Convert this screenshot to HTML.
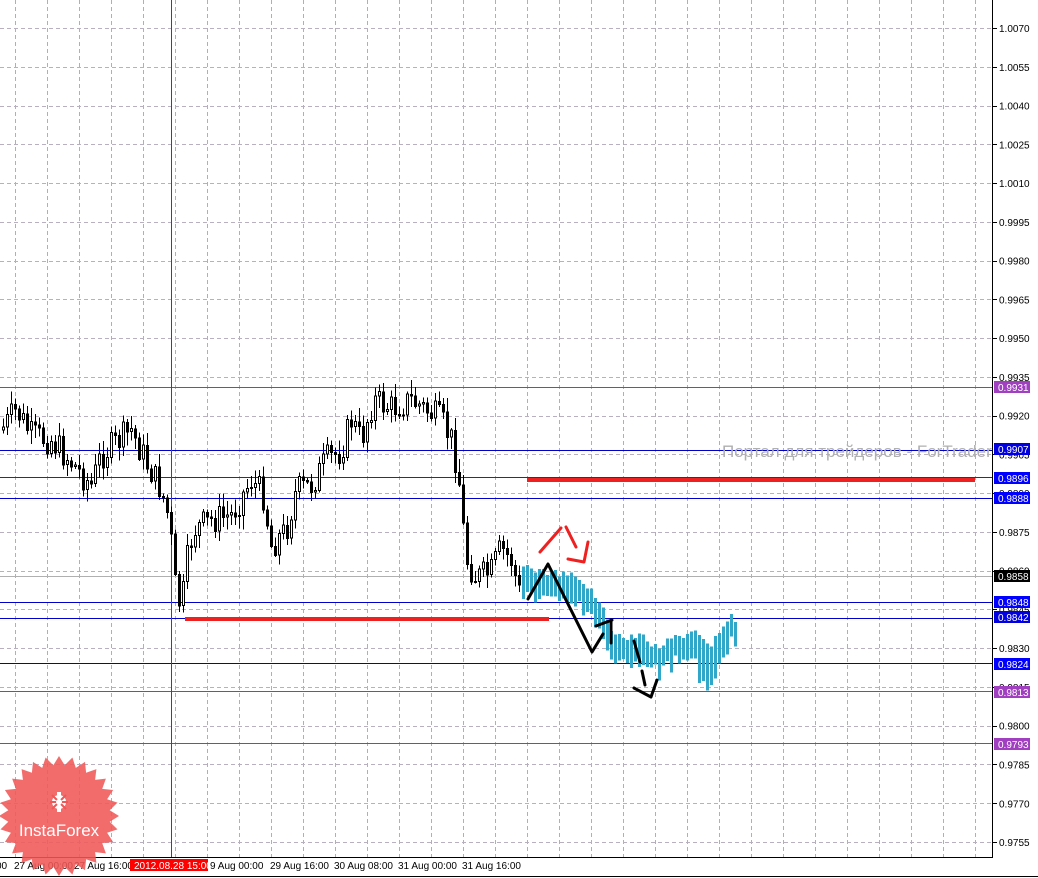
<!DOCTYPE html>
<html><head><meta charset="utf-8">
<style>
html,body{margin:0;padding:0;background:#fff;}
body{width:1038px;height:878px;overflow:hidden;position:relative;}
svg{position:absolute;left:0;top:0;}
text{font-family:"Liberation Sans",sans-serif;}
</style></head>
<body>
<svg id="s" width="1038" height="878" viewBox="0 0 1038 878" xmlns="http://www.w3.org/2000/svg" shape-rendering="crispEdges">
<rect width="1038" height="878" fill="#fff"/>
<g id="grid"></g>
<g stroke-width="1">
<line x1="0" y1="387.5" x2="992" y2="387.5" stroke="#a030c0"/>
<line x1="0" y1="450.5" x2="992" y2="450.5" stroke="#0000c8"/>
<line x1="0" y1="477.5" x2="992" y2="477.5" stroke="#303060"/>
<line x1="0" y1="498.5" x2="992" y2="498.5" stroke="#0000c8"/>
<line x1="0" y1="576.5" x2="992" y2="576.5" stroke="#b0b0b0"/>
<line x1="0" y1="602.5" x2="992" y2="602.5" stroke="#0000c8"/>
<line x1="0" y1="618.5" x2="992" y2="618.5" stroke="#0000c8"/>
<line x1="0" y1="663.5" x2="992" y2="663.5" stroke="#0000c8"/>
<line x1="0" y1="691.5" x2="992" y2="691.5" stroke="#a030c0"/>
<line x1="0" y1="743.5" x2="992" y2="743.5" stroke="#a030c0"/>
</g>
<rect x="527" y="478" width="448" height="4" fill="#ee2020"/>
<rect x="185" y="617" width="364" height="4" fill="#ee2020"/>
<line x1="171.5" y1="0" x2="171.5" y2="857" stroke="#d01010"/>
<g id="candles"></g>
<g id="fc"></g>
<text x="722" y="457" font-size="17" fill="#b0b0b0" shape-rendering="auto">Портал для трейдеров - ForTrader.ru</text>
<g fill="none" stroke="#000" stroke-width="3" stroke-linecap="round" stroke-linejoin="round" shape-rendering="auto">
<polyline points="528,599 548,564 592,652 603,634"/>
<polyline points="596,626 612,620"/>
<line x1="611" y1="620" x2="611" y2="643"/>
<line x1="634" y1="641" x2="640" y2="662"/>
<line x1="642" y1="671" x2="645" y2="685"/>
<polyline points="634,688 651,697 657,680"/>
</g>
<g fill="none" stroke="#ee2020" stroke-width="3" stroke-linecap="round" stroke-linejoin="round" shape-rendering="auto">
<line x1="540" y1="552" x2="561" y2="528"/>
<line x1="566" y1="527" x2="576" y2="547"/>
<polyline points="568,559 584,562 588,542"/>
</g>
<rect x="993" y="0" width="45" height="878" fill="#fff"/>
<line x1="992.5" y1="0" x2="992.5" y2="857" stroke="#000"/>
<rect x="0" y="858" width="993" height="20" fill="#fff"/>
<line x1="0" y1="857.5" x2="993" y2="857.5" stroke="#000"/>
<line x1="0" y1="876.5" x2="1038" y2="876.5" stroke="#000"/>
<g id="ylab" font-size="10" fill="#000"></g>
<g id="xlab" font-size="10" fill="#000">
<text x="-4" y="869">00</text>
<text x="14" y="869">27 Aug 00:00</text>
<text x="74" y="869">27 Aug 16:00</text>
<rect x="130" y="859" width="78" height="12" fill="#ff0000"/>
<text x="134" y="869" fill="#fff">2012.08.28 15:00</text>
<text x="210" y="869">9 Aug 00:00</text>
<text x="270" y="869">29 Aug 16:00</text>
<text x="334" y="869">30 Aug 08:00</text>
<text x="398" y="869">31 Aug 00:00</text>
<text x="462" y="869">31 Aug 16:00</text>
</g>
<g shape-rendering="auto">
<polygon id="star" fill="#f05858" fill-opacity="0.88"/>
<g fill="#fff">
<circle cx="59" cy="802" r="7"/>
<rect x="57" y="792" width="4" height="20"/>
</g>
<g stroke="#f05858" stroke-width="2"><line x1="50" y1="802" x2="68" y2="802"/><line x1="52" y1="795" x2="66" y2="809"/><line x1="66" y1="795" x2="52" y2="809"/></g>
<circle cx="59" cy="802" r="3" fill="#fff"/>
<text x="59" y="836" font-size="17" fill="#fff" text-anchor="middle">InstaForex</text>
</g>
</svg>
<script>
var NS="http://www.w3.org/2000/svg";
function el(p,t,a){var e=document.createElementNS(NS,t);for(var k in a)e.setAttribute(k,a[k]);p.appendChild(e);return e;}
var g=document.getElementById('grid');
for(var x=15;x<990;x+=32)el(g,'line',{x1:x+.5,y1:0,x2:x+.5,y2:857,stroke:'#b0b0b0','stroke-dasharray':'4,3'});
var top0=28,pp=25842;
function Y(p){return top0+(1.0070-p)*pp;}
var yl=document.getElementById('ylab');
for(var i=0;i<=21;i++){var p=1.0070-i*0.0015;var y=Y(p);
el(g,'line',{x1:0,y1:Math.round(y)+.5,x2:992,y2:Math.round(y)+.5,stroke:'#b8b0c0','stroke-dasharray':'4,3'});
el(yl,'line',{x1:993,y1:Math.round(y)+.5,x2:997,y2:Math.round(y)+.5,stroke:'#000'});
var t=el(yl,'text',{x:999,y:y+4});t.textContent=p.toFixed(4);}
var boxes=[[0.9931,'#a040c0','#fff'],[0.9907,'#0000e0','#fff'],[0.9896,'#0000ff','#fff'],[0.9888,'#0000ff','#fff'],[0.9858,'#000','#fff'],[0.9848,'#0000ff','#fff'],[0.9842,'#0000e0','#fff'],[0.9824,'#0000ff','#fff'],[0.9813,'#a040c0','#fff'],[0.9793,'#a040c0','#fff']];
boxes.forEach(function(b){var y=Math.round(Y(b[0]));el(yl,'rect',{x:994,y:y-6,width:36,height:12,fill:b[1]});var t=el(yl,'text',{x:998,y:y+4,fill:b[2]});t.textContent=b[0].toFixed(4);});
var seed=7;function r(){seed=(seed*9301+49297)%233280;return seed/233280;}
function interp(k,x){for(var i=0;i<k.length-1;i++){if(x<=k[i+1][0]){var a=k[i],b=k[i+1];return a[1]+(b[1]-a[1])*(x-a[0])/(b[0]-a[0]);}}return k[k.length-1][1];}
var keys=[[0,430],[15,410],[30,435],[50,440],[70,462],[90,485],[100,455],[130,430],[145,462],[160,490],[168,520],[174,585],[180,610],[186,560],[192,530],[210,520],[230,515],[250,480],[262,495],[270,545],[285,530],[295,490],[310,485],[325,460],[340,450],[350,420],[360,440],[372,400],[390,408],[410,400],[425,410],[440,420],[450,440],[457,470],[461,520],[466,560],[475,578],[490,572],[500,548],[510,560],[518,592]];
var cg=document.getElementById('candles');var prev=430;
for(var x=2;x<=518;x+=4){var c=interp(keys,x)+(r()-0.5)*30;var o=prev;var hi=Math.min(o,c)-r()*12-2,lo=Math.max(o,c)+r()*12+2;
el(cg,'line',{x1:x+1.5,y1:hi,x2:x+1.5,y2:lo,stroke:'#000'});
var bt=Math.min(o,c),bh=Math.max(Math.abs(o-c),1);
if(c<o)el(cg,'rect',{x:x+.5,y:bt,width:2,height:bh,fill:'#fff',stroke:'#000'});else el(cg,'rect',{x:x,y:bt,width:3,height:bh+1,fill:'#000'});
prev=c;}
var tops=[[522,567],[540,572],[560,575],[580,578],[590,590],[600,602],[606,622],[612,635],[625,640],[640,635],[655,648],[670,640],[690,635],[700,633],[710,645],[720,630],[728,614],[735,622]];
var fg=document.getElementById('fc');
for(var x=522;x<=735;x+=4){var t=interp(tops,x)+(r()-0.5)*8;var h=20+r()*14;if(x>=695&&x<=715)h+=18;
el(fg,'rect',{x:x,y:t,width:3,height:h,fill:'#30a6c8'});}
var pts=[],cx=59,cy=816,n=28;for(var i=0;i<n*2;i++){var a=Math.PI*i/n-Math.PI/2;var rr=i%2?51:60;pts.push((cx+rr*Math.cos(a)).toFixed(1)+','+(cy+rr*Math.sin(a)).toFixed(1));}
document.getElementById('star').setAttribute('points',pts.join(' '));
</script>
</body></html>
